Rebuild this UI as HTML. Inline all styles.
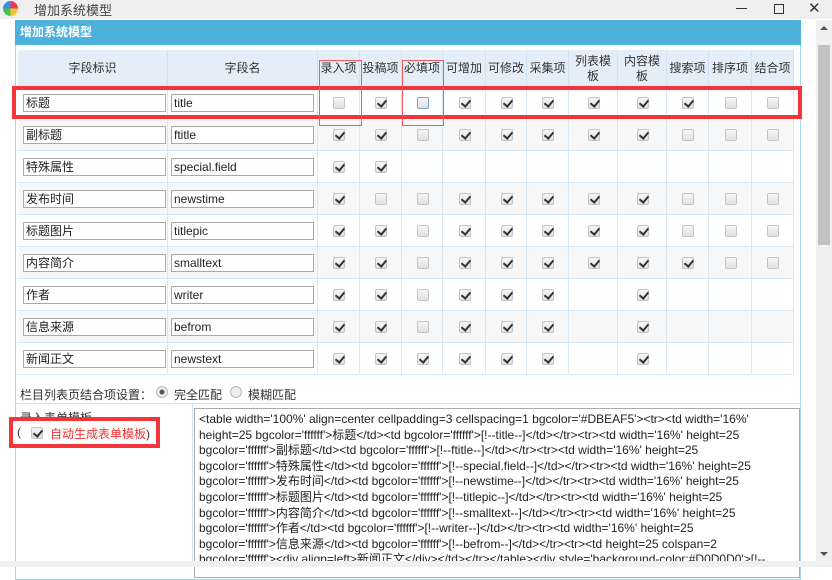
<!DOCTYPE html>
<html><head><meta charset="utf-8"><style>
*{box-sizing:border-box;margin:0;padding:0}
body{width:832px;height:567px;overflow:hidden;background:#fff;position:relative;font-family:"Liberation Sans","Noto Sans CJK SC",sans-serif;font-size:12px;color:#333}
.a{position:absolute}
.tb{left:0;top:0;width:832px;height:19px;background:#efefef}
.hd{left:15px;top:20px;width:786px;height:25px;background:#4eb1dc;color:#fff;font-weight:bold;font-size:12px;line-height:25px;padding-left:5px}
.panel{left:15px;top:20px;width:786px;height:560px;border:1px solid #a9d8ee}
.th{top:50px;height:37px;background:#e3eef8;border-right:1px solid #cfe3f2;text-align:center;color:#333;font-size:12px;display:flex;align-items:center;justify-content:center;line-height:15px}
.row{left:18px;width:776px;height:32px;border-bottom:1px solid #d8e8f5}
.cell{height:32px;border-right:1px solid #d8e8f5}
.inp{height:18px;border:1px solid #aaa;background:#fff;font-size:12px;line-height:16px;padding-left:2px;color:#222}
.cb{width:12px;height:12px;border:1px solid #c4c4c4;border-radius:2px;background:linear-gradient(#f6f6f6,#e0e0e0)}
.cb.on::after{content:"";position:absolute;left:3px;top:0px;width:4px;height:7px;border:solid #333;border-width:0 2px 2px 0;transform:rotate(40deg)}
.red{border:4px solid #f5353a}
.red1{border:1px solid #f25a5e}
.ta{left:194px;top:408px;width:606px;height:170px;border:1px solid #aaa;padding:3px 4px;font-size:12px;line-height:15.6px;color:#222;white-space:nowrap;overflow:hidden}
</style></head><body>
<div class="a tb"></div>
<div class="a" style="left:3px;top:1px;width:15px;height:15px;border-radius:50%;background:conic-gradient(#e93a5a 0 25%,#f7c52b 0 50%,#4cbf4a 0 75%,#3b8fe0 0)"></div>
<div class="a" style="left:34px;top:0px;font-size:13px;color:#444">增加系统模型</div>
<div class="a" style="left:736px;top:8px;width:11px;height:1px;background:#333"></div>
<div class="a" style="left:774px;top:4px;width:10px;height:10px;border:1.5px solid #333"></div>
<div class="a" style="left:808px;top:-1px;font-size:15px;color:#333">✕</div>
<div class="a panel"></div>
<div class="a hd">增加系统模型</div>
<div class="a" style="left:816px;top:20px;width:16px;height:547px;background:#f0f0f0"></div>
<div class="a" style="left:818px;top:45px;width:12px;height:200px;background:#c2c2c2"></div>
<div class="a" style="left:820px;top:26px;width:0;height:0;border-left:4px solid transparent;border-right:4px solid transparent;border-bottom:4px solid #555"></div>
<div class="a" style="left:820px;top:552px;width:0;height:0;border-left:4px solid transparent;border-right:4px solid transparent;border-top:4px solid #555"></div>
<div id="t"></div>
<div class="a" style="left:20px;top:386px;">栏目列表页结合项设置：</div>
<div class="a" style="left:156px;top:386px;width:12px;height:12px;border-radius:50%;border:1px solid #bbb;background:radial-gradient(#555 0 2px,#eee 3px)"></div>
<div class="a" style="left:174px;top:386px;">完全匹配</div>
<div class="a" style="left:230px;top:386px;width:12px;height:12px;border-radius:50%;border:1px solid #bbb;background:#eee"></div>
<div class="a" style="left:248px;top:386px;">模糊匹配</div>
<div class="a" style="left:15px;top:403px;width:786px;height:1px;background:#cfe3f2"></div>
<div class="a" style="left:192px;top:403px;width:1px;height:164px;background:#cfe3f2"></div>
<div class="a" style="left:20px;top:409px;">录入表单模板</div>
<div class="a red" style="left:9px;top:417px;width:151px;height:31px;background:#fff"></div>
<div class="a" style="left:17px;top:425px;">(</div>
<div class="a cb on" style="left:31px;top:427px"></div>
<div class="a" style="left:50px;top:425px;color:#f03030">自动生成表单模板<span style="color:#333">)</span></div>
<div class="a ta">&lt;table width='100%' align=center cellpadding=3 cellspacing=1 bgcolor='#DBEAF5'&gt;&lt;tr&gt;&lt;td width='16%'<br>height=25 bgcolor='ffffff'&gt;标题&lt;/td&gt;&lt;td bgcolor='ffffff'&gt;[!--title--]&lt;/td&gt;&lt;/tr&gt;&lt;tr&gt;&lt;td width='16%' height=25<br>bgcolor='ffffff'&gt;副标题&lt;/td&gt;&lt;td bgcolor='ffffff'&gt;[!--ftitle--]&lt;/td&gt;&lt;/tr&gt;&lt;tr&gt;&lt;td width='16%' height=25<br>bgcolor='ffffff'&gt;特殊属性&lt;/td&gt;&lt;td bgcolor='ffffff'&gt;[!--special.field--]&lt;/td&gt;&lt;/tr&gt;&lt;tr&gt;&lt;td width='16%' height=25<br>bgcolor='ffffff'&gt;发布时间&lt;/td&gt;&lt;td bgcolor='ffffff'&gt;[!--newstime--]&lt;/td&gt;&lt;/tr&gt;&lt;tr&gt;&lt;td width='16%' height=25<br>bgcolor='ffffff'&gt;标题图片&lt;/td&gt;&lt;td bgcolor='ffffff'&gt;[!--titlepic--]&lt;/td&gt;&lt;/tr&gt;&lt;tr&gt;&lt;td width='16%' height=25<br>bgcolor='ffffff'&gt;内容简介&lt;/td&gt;&lt;td bgcolor='ffffff'&gt;[!--smalltext--]&lt;/td&gt;&lt;/tr&gt;&lt;tr&gt;&lt;td width='16%' height=25<br>bgcolor='ffffff'&gt;作者&lt;/td&gt;&lt;td bgcolor='ffffff'&gt;[!--writer--]&lt;/td&gt;&lt;/tr&gt;&lt;tr&gt;&lt;td width='16%' height=25<br>bgcolor='ffffff'&gt;信息来源&lt;/td&gt;&lt;td bgcolor='ffffff'&gt;[!--befrom--]&lt;/td&gt;&lt;/tr&gt;&lt;tr&gt;&lt;td height=25 colspan=2<br>bgcolor='ffffff'&gt;&lt;div align=left&gt;新闻正文&lt;/div&gt;&lt;/td&gt;&lt;/tr&gt;&lt;/table&gt;&lt;div style='background-color:#D0D0D0'&gt;[!--</div>
<div class="a" style="left:0;top:561px;width:816px;height:6px;background:#f0f0f0"></div>
<script>
var X=[18,168,318,360,402,443,486,527,569,618,667,709,752,794];
var H=["字段标识","字段名","录入项","投稿项","必填项","可增加","可修改","采集项","列表模<br>板","内容模<br>板","搜索项","排序项","结合项"];
var L=[["标题","title"],["副标题","ftitle"],["特殊属性","special.field"],["发布时间","newstime"],["标题图片","titlepic"],["内容简介","smalltext"],["作者","writer"],["信息来源","befrom"],["新闻正文","newstext"]];
var C=["01011111100","11011111000","11","10011111000","11011111000","11011111100","110111 1    ","110111 1    ","111111 1    "];
var h="";
for(var i=0;i<13;i++)h+='<div class="a th" style="left:'+X[i]+'px;width:'+(X[i+1]-X[i])+'px">'+H[i]+'</div>';
for(var r=0;r<9;r++){var y=87+r*32;var bg=(r%2==1)?'#f7f7f7':'#fff';
h+='<div class="a row" style="top:'+y+'px;background:'+bg+'"></div>';
for(var i=0;i<13;i++)h+='<div class="a cell" style="left:'+X[i]+'px;top:'+y+'px;width:'+(X[i+1]-X[i])+'px"></div>';
h+='<div class="a inp" style="left:23px;top:'+(y+7)+'px;width:143px">'+L[r][0]+'</div>';
h+='<div class="a inp" style="left:171px;top:'+(y+7)+'px;width:143px">'+L[r][1]+'</div>';
var s=C[r];for(var k=0;k<11;k++){var ch=s[k];if(ch!=='0'&&ch!=='1')continue;var cx=(X[k+2]+X[k+3])/2-6;
var ex=(r==0&&k==2)?';border-color:#7aa7d8':'';
h+='<div class="a cb'+(ch=='1'?' on':'')+'" style="left:'+cx+'px;top:'+(y+10)+'px'+ex+'"></div>';}}
h+='<div class="a red" style="left:12px;top:86px;width:790px;height:33px"></div>';
h+='<div class="a red1" style="left:319px;top:60px;width:43px;height:66px"></div>';
h+='<div class="a red1" style="left:402px;top:60px;width:42px;height:66px"></div>';
document.getElementById('t').innerHTML=h;
</script>
</body></html>
